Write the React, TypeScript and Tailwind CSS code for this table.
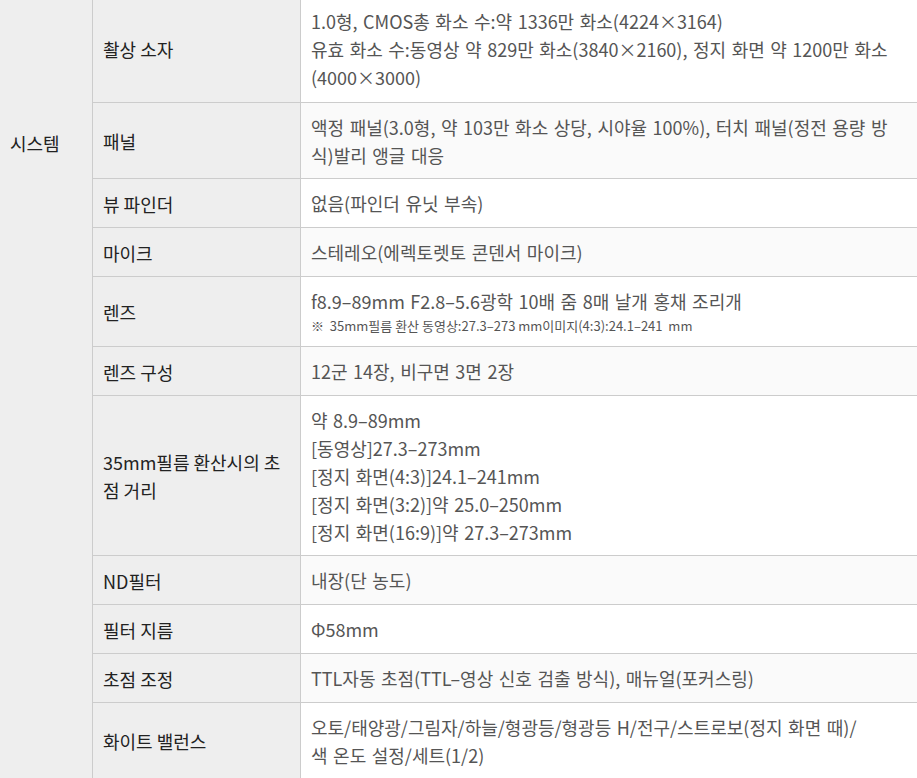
import React from 'react'

type Row = {
    label: React.ReactNode
    lines: string[]
    note?: string
    first?: boolean
}

const rows: Row[] = [
    {
        label: '촬상 소자',
        lines: [
            '1.0형, CMOS총 화소 수:약 1336만 화소(4224×3164)',
            '유효 화소 수:동영상 약 829만 화소(3840×2160), 정지 화면 약 1200만 화소',
            '(4000×3000)',
        ],
        first: true,
    },
    {
        label: '패널',
        lines: [
            '액정 패널(3.0형, 약 103만 화소 상당, 시야율 100%), 터치 패널(정전 용량 방',
            '식)발리 앵글 대응',
        ],
    },
    { label: '뷰 파인더', lines: ['없음(파인더 유닛 부속)'] },
    { label: '마이크', lines: ['스테레오(에렉토렛토 콘덴서 마이크)'] },
    {
        label: '렌즈',
        lines: ['f8.9–89mm F2.8–5.6광학 10배 줌 8매 날개 홍채 조리개'],
        note: '※  35mm필름 환산 동영상:27.3–273 mm이미지(4:3):24.1–241  mm',
    },
    { label: '렌즈 구성', lines: ['12군 14장, 비구면 3면 2장'] },
    {
        label: (
            <>
                35mm필름 환산시의 초
                <br />
                점 거리
            </>
        ),
        lines: [
            '약 8.9–89mm',
            '[동영상]27.3–273mm',
            '[정지 화면(4:3)]24.1–241mm',
            '[정지 화면(3:2)]약 25.0–250mm',
            '[정지 화면(16:9)]약 27.3–273mm',
        ],
    },
    { label: 'ND필터', lines: ['내장(단 농도)'] },
    { label: '필터 지름', lines: ['Φ58mm'] },
    { label: '초점 조정', lines: ['TTL자동 초점(TTL–영상 신호 검출 방식), 매뉴얼(포커스링)'] },
    {
        label: '화이트 밸런스',
        lines: ['오토/태양광/그림자/하늘/형광등/형광등 H/전구/스트로보(정지 화면 때)/', '색 온도 설정/세트(1/2)'],
    },
]

export default function App() {
    return (
        <div className="w-[917px] bg-white font-['Noto_Sans_CJK_KR',sans-serif] text-[18px] leading-[28px] flex overflow-hidden">
            <div className="w-[93px] shrink-0 bg-[#eeeeee] border-r border-[#cccccc] pl-[10px] pt-[129px] text-[#222222]">
                시스템
            </div>
            <div className="flex-1 flex flex-col">
                {rows.map((row, i) => {
                    const pad = row.first ? 'pt-[7px] pb-[11px]' : 'pt-[10px] pb-[9px]'
                    return (
                        <div
                            key={i}
                            className="flex min-h-[49px] border-b border-[#cccccc]"
                        >
                            <div
                                className={`w-[208px] shrink-0 bg-[#eeeeee] border-r border-[#cccccc] px-[10px] ${pad} flex items-center text-[#222222]`}
                            >
                                <div>{row.label}</div>
                            </div>
                            <div
                                className={`flex-1 px-[10px] ${pad} text-[#555555] whitespace-nowrap [word-spacing:1.5px] ${
                                    i % 2 === 0 ? 'bg-white' : 'bg-[#fafafa]'
                                }`}
                            >
                                {row.lines.map((l, j) => (
                                    <div key={j}>{l}</div>
                                ))}
                                {row.note && (
                                    <div className="text-[13px] leading-[22px] whitespace-pre [word-spacing:0px]">
                                        {row.note}
                                    </div>
                                )}
                            </div>
                        </div>
                    )
                })}
            </div>
        </div>
    )
}
